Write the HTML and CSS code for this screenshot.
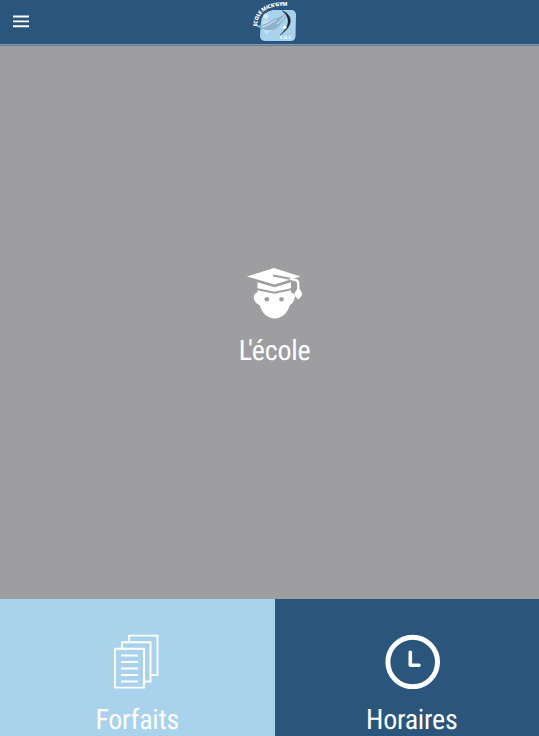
FILE: index.html
```html
<!DOCTYPE html>
<html lang="fr">
<head>
  <meta charset="UTF-8">
  <meta name="viewport" content="width=device-width, initial-scale=1.0">
  <title>Ecole Mick'Gym</title>
  <link rel="stylesheet" href="styles.css">
</head>
<body>
  <header class="header">
    <button class="menu" type="button" aria-label="Menu">
      <svg width="16" height="13" viewBox="0 0 16 13">
        <path d="M0 1.500h16M0 6.400h16M0 11.200h16" stroke="#fff" stroke-width="1.900"/>
      </svg>
    </button>
    <a class="logo" href="#">
      <svg width="46" height="44" viewBox="0 0 46 44">
        <defs>
          <path id="arc" d="M5.400 26.500C4.500 14 14 4.500 37 6"/>
        </defs>
        <path d="M21 10h18q5 0 5 5l-.5 21q0 5-5 5H14q-6 0-6-5l1-14q1-10 12-12z" fill="#a9d2ed"/>
        <path d="M12 20c-3 5-2 9 2 14 5-2 10-8 12-12" fill="#c3e1f3"/>
        <path d="M2.500 25c9 2 13-3 20-6 7-2 11-5 14.500-9-2 8-6 11-9.500 15.500-6 7-15 6-25-.5z" fill="#8db3cf"/>
        <path d="M10 27c6-1 8-4 14-7M25 24c4-3 7-7 10-11" fill="none" stroke="#dcecf5" stroke-width="1"/>
        <path d="M30 10.500C41 15 42 26 28 35 38 26 39 18 30 10.500z" fill="#1d2630" stroke="#1d2630" stroke-width=".4"/>
        <circle cx="13.800" cy="16.300" r="2.600" fill="#d6eaf7"/>
        <circle cx="32.800" cy="27.200" r="1.700" fill="#fff"/>
        <text class="logo-name"><textPath href="#arc" textLength="42">ECOLE MICK'GYM</textPath></text>
        <text class="logo-ems" x="28" y="38.800" textLength="12">E.M.S.</text>
      </svg>
    </a>
  </header>

  <main class="tiles">
    <a class="tile tile-school" href="#">
      <svg class="icon" width="56" height="56" viewBox="0 0 56 56">
        <path d="M0 9.500L27 1l26.500 8.500-26 8z" fill="#fff"/>
        <path d="M10.500 15.200l17 5 16.500-5v6l-16.500 3.600-17-3.600zM10.500 23.200l17 3.600 16.500-3.600v2.300q4.500.8 3.700 5-1 6-5 7.700c-2 7-7 13-15 13.300-8-.2-13-6.300-15-13.300-4-1.700-5.800-4.500-6-8.200.3-3 2-4.200 3.800-4.500z" fill="#fff"/>
        <path d="M26 8.500l21 4" fill="none" stroke="#9e9ea0" stroke-width="1.800"/>
        <path d="M43 11.800l5 1q3.300.5 3.300 4v7" fill="none" stroke="#fff" stroke-width="2.200"/>
        <path d="M51.500 21.500c2 1 3.500 3.500 3.500 5.500 0 1.800-1 3-2 3.800l-1.500 1.700-2-1.700c-1-.8-2-2-2-3.800 0-2 2-4.500 4-5.500z" fill="#fff"/>
        <circle cx="19.800" cy="32.200" r="2.300" fill="#9e9ea0"/>
        <circle cx="34.500" cy="32.200" r="2.300" fill="#9e9ea0"/>
      </svg>
      <span class="label"><span class="kern">L</span>'école</span>
    </a>
    <a class="tile tile-packages" href="#">
      <svg class="icon" width="56" height="56" viewBox="0 0 56 56" fill="none" stroke="#fff" stroke-width="1.900">
        <path d="M6 15.800h29v38.800H6zM13 15.800V9.200h28.500V48.500H35M20 9.200v-6.600h28.500V42h-7"/>
        <path d="M12 22.500h17M12 29h17M12 35.500h17M12 42h17M12 48.500h17"/>
      </svg>
      <span class="label">Forfaits</span>
    </a>
    <a class="tile tile-hours" href="#">
      <svg class="icon" width="56" height="56" viewBox="0 0 56 56" fill="none" stroke="#fff">
        <circle cx="28.700" cy="29" r="24.800" stroke-width="5"/>
        <path d="M26.300 19.300v12.900h8.700" stroke-width="3.600" stroke-linecap="round" stroke-linejoin="round"/>
      </svg>
      <span class="label">Horaires</span>
    </a>
  </main>
</body>
</html>
```

FILE: styles.css
```css
* {
  box-sizing: border-box;
}
body {
  margin: 0;
  height: 736px;
  overflow: hidden;
  background: #2a557d;
  font-family: "Roboto Condensed", Roboto, sans-serif;
  font-stretch: 75%;
  text-rendering: geometricPrecision;
}
.header {
  display: grid;
  grid-template-columns: 1fr auto 1fr;
  width: 549px;
  height: 45px;
  background: #2a557d;
  border-bottom: 1px solid #8199af;
}
.menu {
  display: flex;
  width: 42px;
  height: 44px;
  padding: 15px 13px;
  background: none;
  border: 0;
  cursor: pointer;
}
.menu svg {
  flex: none;
}
.logo {
  height: 44px;
}
.logo svg {
  display: block;
}
.logo-name {
  font: 800 5.3px "Open Sans", sans-serif;
  fill: #fff;
}
.logo-ems {
  font: bold 4px "Open Sans", sans-serif;
  fill: #fff;
}
.tiles {
  display: grid;
  grid-template-columns: 1fr 1fr;
  grid-template-rows: 553px 137px;
  width: 549px;
  border-top: 1px solid #667f97;
}
.tile {
  display: flex;
  flex-direction: column;
  align-items: center;
  color: #fff;
  text-decoration: none;
}
.tile-school {
  grid-column: 1 / 3;
  padding-top: 221px;
  background: #9e9ea0;
}
.tile-packages {
  padding-top: 34px;
  background: #a9d2ed;
}
.tile-hours {
  padding-top: 34px;
  background: #2a557d;
}
.label {
  margin-top: 15px;
  font-size: 28px;
  line-height: 32px;
  letter-spacing: -0.25px;
}
.kern {
  letter-spacing: -4px;
}
.tile-school .label {
  margin-top: 12px;
}
```
